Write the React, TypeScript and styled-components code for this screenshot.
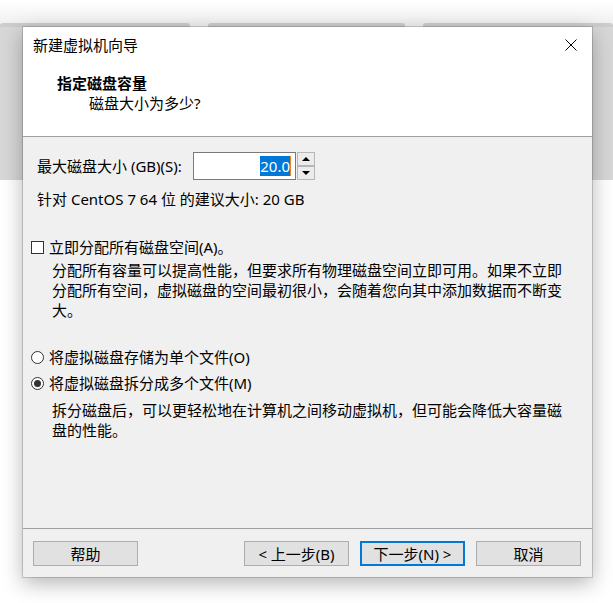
import React from "react";
import styled, { createGlobalStyle } from "styled-components";

const Global = createGlobalStyle`
  html, body { margin: 0; padding: 0; background: #fff; }
  body {
    font-family: "Noto Sans", "Noto Sans CJK SC", sans-serif;
    font-size: 15px;
    color: #000;
  }
  #root { width: 613px; height: 603px; }
`;

const Page = styled.div`
  position: relative;
  width: 613px;
  height: 603px;
  overflow: hidden;
  background: #fff;
`;

const Backdrop = styled.div`
  display: flex;
  flex-direction: column;
`;

const TopFade = styled.div`
  height: 23px;
  background: linear-gradient(#ffffff, #f1f1f1);
`;

const TabStrip = styled.div`
  display: flex;
  gap: 18px;
  height: 4px;
  background: #f1f1f1;
`;

const Tab = styled.div<{ $w: number }>`
  width: ${(p) => p.$w}px;
  background: #cdcdcd;
  border-radius: 3px 3px 0 0;
`;

const GrayArea = styled.div`
  height: 153px;
  background: linear-gradient(90deg, #d7d7d7, #dadada 50%, #d7d7d7);
`;

const Dialog = styled.div`
  position: absolute;
  left: 23px;
  top: 27px;
  width: 569px;
  height: 550px;
  display: flex;
  flex-direction: column;
  background: #f0f0f0;
  box-shadow: 0 0 0 1px rgba(0, 0, 0, 0.16), 0 6px 20px rgba(0, 0, 0, 0.3);
`;

const TopPane = styled.div`
  background: #fff;
  border-bottom: 1px solid #a0a0a0;
`;

const TitleBar = styled.div`
  height: 36px;
  display: flex;
  align-items: center;
  justify-content: space-between;
  padding-left: 10px;
  padding-right: 15px;
  line-height: 20px;
`;

const Header = styled.div`
  padding: 10px 0 23px 0;
  line-height: 20px;
`;

const Heading = styled.div`
  padding-left: 34px;
  font-weight: bold;
`;

const SubHeading = styled.div`
  padding-left: 66px;
`;

const Body = styled.div`
  flex: 1;
  display: flex;
  flex-direction: column;
  padding: 15px 0 0 8px;
  line-height: 20px;
`;

const DiskRow = styled.div`
  display: flex;
  align-items: center;
  height: 28px;
  padding-left: 6px;
`;

const DiskLabel = styled.span`
  width: 156px;
`;

const InputBox = styled.div`
  box-sizing: border-box;
  width: 103px;
  height: 28px;
  border: 1px solid #7a7a7a;
  background: #fff;
  display: flex;
  align-items: center;
  justify-content: flex-end;
  padding-right: 4px;
`;

const Selected = styled.span`
  background: #0078d7;
  color: #fff;
  line-height: 20px;
`;

const Caret = styled.span`
  width: 1px;
  height: 20px;
  background: #e8862c;
`;

const Spinner = styled.div`
  width: 18px;
  height: 28px;
  display: flex;
  flex-direction: column;
  margin-left: 1px;
`;

const SpinBtn = styled.div`
  flex: 1;
  box-sizing: border-box;
  border: 1px solid #b7b7b7;
  background: #ececec;
  display: flex;
  align-items: center;
  justify-content: center;
`;

const Arrow = styled.span<{ $up?: boolean }>`
  width: 0;
  height: 0;
  border-left: 4px solid transparent;
  border-right: 4px solid transparent;
  ${(p) =>
    p.$up ? "border-bottom: 4px solid #000;" : "border-top: 4px solid #000;"}
`;

const Suggest = styled.div`
  margin-top: 9px;
  padding-left: 6px;
`;

const OptionRow = styled.label<{ $mt: number }>`
  display: flex;
  align-items: center;
  gap: 5px;
  margin-top: ${(p) => p.$mt}px;
  height: 20px;
`;

const CheckBox = styled.span`
  box-sizing: border-box;
  width: 13px;
  height: 13px;
  border: 1px solid #333;
  background: #fff;
`;

const Radio = styled.span<{ $on?: boolean }>`
  box-sizing: border-box;
  width: 13px;
  height: 13px;
  border-radius: 50%;
  border: 1px solid #333;
  background: #fff;
  display: flex;
  align-items: center;
  justify-content: center;
  &::after {
    content: "";
    display: ${(p) => (p.$on ? "block" : "none")};
    width: 7px;
    height: 7px;
    border-radius: 50%;
    background: #333;
  }
`;

const Desc = styled.div<{ $mt: number }>`
  margin-top: ${(p) => p.$mt}px;
  padding-left: 21px;
  padding-right: 20px;
`;

const Footer = styled.div`
  border-top: 1px solid #a0a0a0;
  padding: 12px 11px 11px 10px;
  display: flex;
  gap: 11px;
`;

const Spacer = styled.div`
  flex: 1;
`;

const Button = styled.button<{ $primary?: boolean }>`
  box-sizing: border-box;
  width: 105px;
  height: 25px;
  margin: 0;
  padding: 0;
  font: inherit;
  font-size: 15px;
  line-height: 20px;
  color: #000;
  background: #e1e1e1;
  border: ${(p) => (p.$primary ? "2px solid #0078d7" : "1px solid #adadad")};
  display: flex;
  align-items: center;
  justify-content: center;
`;

const CloseIcon = () => (
  <svg width="12" height="12" viewBox="0 0 12 12">
    <path d="M0.5 0.5 L11.5 11.5 M11.5 0.5 L0.5 11.5" stroke="#000" strokeWidth="1" />
  </svg>
);

export default function App() {
  return (
    <Page>
      <Global />
      <Backdrop>
        <TopFade />
        <TabStrip>
          <Tab $w={190} />
          <Tab $w={197} />
          <Tab $w={190} />
        </TabStrip>
        <GrayArea />
      </Backdrop>
      <Dialog>
        <TopPane>
          <TitleBar>
            <span>新建虚拟机向导</span>
            <CloseIcon />
          </TitleBar>
          <Header>
            <Heading>指定磁盘容量</Heading>
            <SubHeading>磁盘大小为多少?</SubHeading>
          </Header>
        </TopPane>
        <Body>
          <DiskRow>
            <DiskLabel>最大磁盘大小 (GB)(S):</DiskLabel>
            <InputBox>
              <Selected>20.0</Selected>
              <Caret />
            </InputBox>
            <Spinner>
              <SpinBtn>
                <Arrow $up />
              </SpinBtn>
              <SpinBtn>
                <Arrow />
              </SpinBtn>
            </Spinner>
          </DiskRow>
          <Suggest>针对 CentOS 7 64 位 的建议大小: 20 GB</Suggest>
          <OptionRow $mt={28}>
            <CheckBox />
            <span>立即分配所有磁盘空间(A)。</span>
          </OptionRow>
          <Desc $mt={3}>
            分配所有容量可以提高性能，但要求所有物理磁盘空间立即可用。如果不立即分配所有空间，虚拟磁盘的空间最初很小，会随着您向其中添加数据而不断变大。
          </Desc>
          <OptionRow $mt={27}>
            <Radio />
            <span>将虚拟磁盘存储为单个文件(O)</span>
          </OptionRow>
          <OptionRow $mt={6}>
            <Radio $on />
            <span>将虚拟磁盘拆分成多个文件(M)</span>
          </OptionRow>
          <Desc $mt={7}>
            拆分磁盘后，可以更轻松地在计算机之间移动虚拟机，但可能会降低大容量磁盘的性能。
          </Desc>
        </Body>
        <Footer>
          <Button>帮助</Button>
          <Spacer />
          <Button>&lt; 上一步(B)</Button>
          <Button $primary>下一步(N) &gt;</Button>
          <Button>取消</Button>
        </Footer>
      </Dialog>
    </Page>
  );
}
